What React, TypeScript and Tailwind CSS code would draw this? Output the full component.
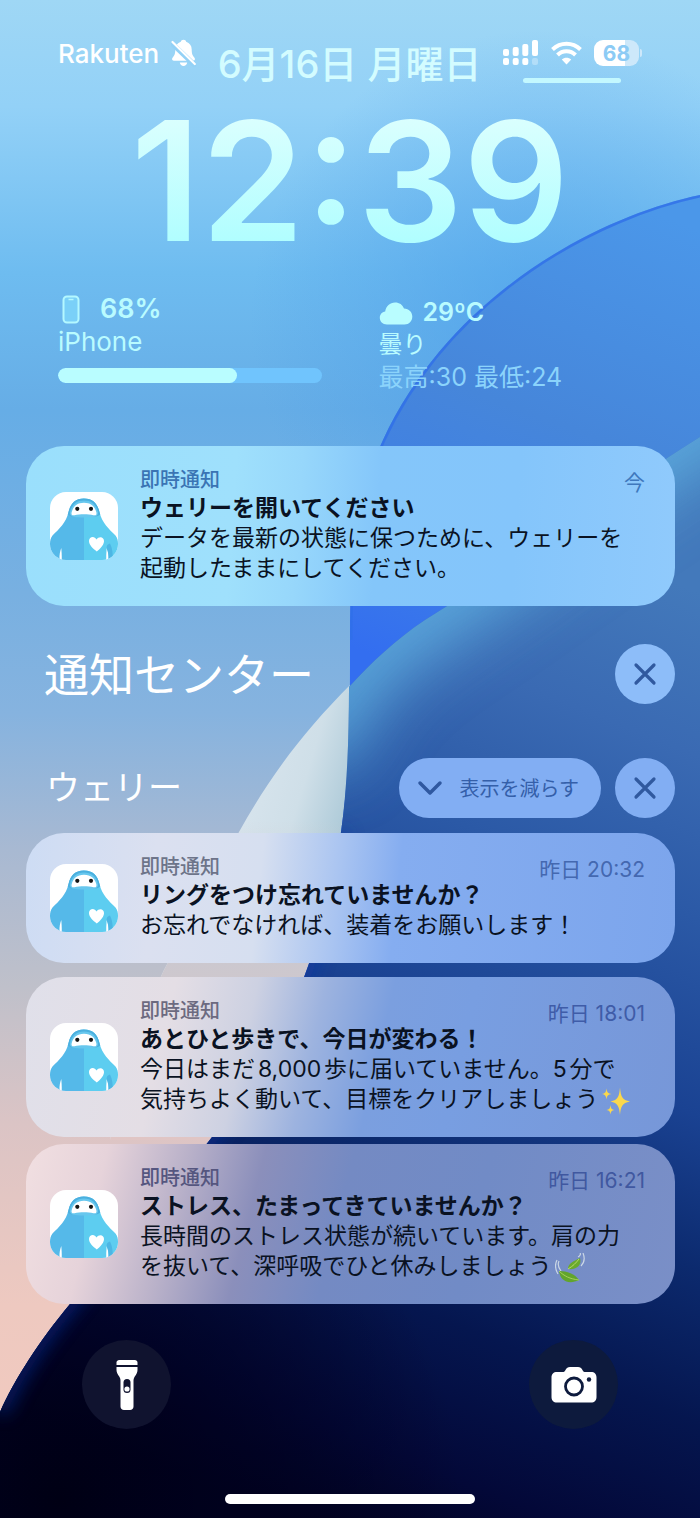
import React from 'react';

interface Notice {
    id: number;
    kind: string;
    title: string;
    lines: string[];
    time: string;
    emoji?: 'sparkles' | 'leaf';
    surface: string;
    kindColor: string;
    timeColor: string;
}

const pinned: Notice = {
    id: 1,
    kind: '即時通知',
    title: 'ウェリーを開いてください',
    lines: ['データを最新の状態に保つために、ウェリーを', '起動したままにしてください。'],
    time: '今',
    surface: 'bg-[linear-gradient(94deg,#9adffc_0%,#9fe0fc_32%,#97d7fb_42%,#84c6fa_54%,#84c5fb_75%,#90cafc_100%)]',
    kindColor: 'text-[#3a74b4]',
    timeColor: 'text-[#3f78bd]',
};

const history: Notice[] = [
    {
        id: 2,
        kind: '即時通知',
        title: 'リングをつけ忘れていませんか？',
        lines: ['お忘れでなければ、装着をお願いします！'],
        time: '昨日 20:32',
        surface: 'bg-[linear-gradient(96deg,#cddcf4_0%,#dbe0f0_20%,#d6dff0_36%,#a9c4f1_48%,#85adf0_57%,#7ca5ec_100%)]',
        kindColor: 'text-[#6d7489]',
        timeColor: 'text-[#4468b0]',
    },
    {
        id: 3,
        kind: '即時通知',
        title: 'あとひと歩きで、今日が変わる！',
        lines: ['今日はまだ8,000歩に届いていません。5分で', '気持ちよく動いて、目標をクリアしましょう'],
        time: '昨日 18:01',
        emoji: 'sparkles',
        surface: 'bg-[linear-gradient(103deg,#e0e0ea_0%,#e4dee5_22%,#cdd1e2_34%,#9db3df_44%,#7b9fdf_54%,#789ee1_66%,#7797d8_100%)]',
        kindColor: 'text-[#6c6a80]',
        timeColor: 'text-[#3f5ca8]',
    },
    {
        id: 4,
        kind: '即時通知',
        title: 'ストレス、たまってきていませんか？',
        lines: ['長時間のストレス状態が続いています。肩の力', 'を抜いて、深呼吸でひと休みしましょう'],
        time: '昨日 16:21',
        emoji: 'leaf',
        surface: 'bg-[linear-gradient(104deg,#f1dfe1_0%,#e6d3da_12%,#b9b1c9_24%,#8b8fbb_35%,#748ac3_48%,#718bc6_68%,#7a8fc7_100%)]',
        kindColor: 'text-[#55567f]',
        timeColor: 'text-[#4058a0]',
    },
];

const Wallpaper = () => (
    <svg className="absolute inset-0 -z-10 h-full w-full" viewBox="0 0 700 1518" preserveAspectRatio="none" aria-hidden="true">
        <defs>
            <linearGradient id="sky" x1="0" y1="0" x2="0" y2="1">
                <stop offset="0" stopColor="#9fd7f5" />
                <stop offset="0.07" stopColor="#93d1f7" />
                <stop offset="0.18" stopColor="#6ebcf0" />
                <stop offset="0.27" stopColor="#66ade6" />
                <stop offset="0.39" stopColor="#78b0e1" />
                <stop offset="0.47" stopColor="#86b3df" />
                <stop offset="0.56" stopColor="#a8b9d2" />
                <stop offset="0.65" stopColor="#bfc0ca" />
                <stop offset="0.74" stopColor="#dbc4c5" />
                <stop offset="0.86" stopColor="#eec9c0" />
                <stop offset="1" stopColor="#f3c9be" />
            </linearGradient>
            <radialGradient id="skyDepth" gradientUnits="userSpaceOnUse" cx="540" cy="320" r="290">
                <stop offset="0" stopColor="#4c9fea" stopOpacity="0.7" />
                <stop offset="0.5" stopColor="#4c9fea" stopOpacity="0.35" />
                <stop offset="1" stopColor="#4c9fea" stopOpacity="0" />
            </radialGradient>
            <linearGradient id="ball" gradientUnits="userSpaceOnUse" x1="620" y1="200" x2="440" y2="680">
                <stop offset="0" stopColor="#4b97e9" />
                <stop offset="0.45" stopColor="#4686da" />
                <stop offset="0.75" stopColor="#3e7ee6" />
                <stop offset="1" stopColor="#336ef0" />
            </linearGradient>
            <linearGradient id="leaf" gradientUnits="userSpaceOnUse" x1="240" y1="760" x2="370" y2="800">
                <stop offset="0" stopColor="#d9e5ee" />
                <stop offset="0.5" stopColor="#cfdfe8" />
                <stop offset="1" stopColor="#a2c3d3" />
            </linearGradient>
            <linearGradient id="leafFade" x1="0" y1="0" x2="0" y2="1">
                <stop offset="0.3" stopColor="#d0cdd2" stopOpacity="0" />
                <stop offset="0.6" stopColor="#cbc8cf" stopOpacity="1" />
                <stop offset="1" stopColor="#e0c5c4" />
            </linearGradient>
            <linearGradient id="deep" gradientUnits="userSpaceOnUse" x1="620" y1="560" x2="240" y2="1500">
                <stop offset="0" stopColor="#4379bb" />
                <stop offset="0.15" stopColor="#3a6ab3" />
                <stop offset="0.3" stopColor="#2b59a6" />
                <stop offset="0.48" stopColor="#1a4292" />
                <stop offset="0.62" stopColor="#0c2a6e" />
                <stop offset="0.76" stopColor="#05164f" />
                <stop offset="0.9" stopColor="#030838" />
                <stop offset="1" stopColor="#01021f" />
            </linearGradient>
            <radialGradient id="night" gradientUnits="userSpaceOnUse" cx="60" cy="1500" r="400">
                <stop offset="0" stopColor="#000014" />
                <stop offset="0.4" stopColor="#00001c" stopOpacity="0.7" />
                <stop offset="1" stopColor="#00001c" stopOpacity="0" />
            </radialGradient>
            <filter id="soft" filterUnits="userSpaceOnUse" x="100" y="200" width="800" height="900">
                <feGaussianBlur stdDeviation="34" />
            </filter>
            <filter id="glow" x="-30%" y="-30%" width="160%" height="160%">
                <feGaussianBlur stdDeviation="9" />
            </filter>
            <clipPath id="ballClip">
                <path d="M700 195C600 216 452 292 383 440C355 500 350 560 350 640C350 720 350 770 341 832C320 960 285 1044 212 1137C150 1218 110 1252 70 1304C40 1340 14 1380 0 1412V1518H700Z" />
            </clipPath>
            <clipPath id="deepClip">
                <path d="M700 437C600 500 520 560 425 620C395 640 372 662 349 687C349 740 347 790 341 832C320 960 285 1044 212 1137C150 1218 110 1252 70 1304C40 1340 14 1380 0 1412V1518H700Z" />
            </clipPath>
        </defs>
        <rect width="700" height="1518" fill="url(#sky)" />
        <rect width="700" height="700" fill="url(#skyDepth)" />
        {/* pale leaf between the two curves */}
        <path d="M352 683C300 735 268 780 239 832C210 885 185 930 164 970C140 1020 120 1080 110 1140H230L360 860Z" fill="url(#leaf)" />
        <path d="M352 683C300 735 268 780 239 832C210 885 185 930 164 970C140 1020 120 1080 110 1140H230L360 860Z" fill="url(#leafFade)" />
        <g clipPath="url(#ballClip)">
            <rect width="700" height="1518" fill="url(#ball)" />
            <path d="M700 195C600 216 452 292 383 440C355 500 350 560 350 640" fill="none" stroke="#2f6fe8" strokeWidth="5" opacity="0.8" />
        </g>
        <g clipPath="url(#deepClip)">
            <rect width="700" height="1518" fill="url(#deep)" />
            <path d="M780 370C600 480 520 550 425 610C380 640 345 670 325 710L310 760" fill="none" stroke="#62b4e4" strokeWidth="76" opacity="0.9" filter="url(#soft)" />
            <rect y="1000" width="700" height="518" fill="url(#night)" />
            <path d="M341 832C320 960 285 1044 212 1137C150 1218 110 1252 70 1304C40 1340 14 1380 0 1412" fill="none" stroke="#0d35a8" strokeWidth="14" opacity="0.6" filter="url(#glow)" />
        </g>
    </svg>
);

const BellOff = () => (
    <svg className="h-[28px] w-[25px]" viewBox="0 0 25 28" aria-hidden="true">
        <path d="M12.500 0.800c1.500 0 2.500 0.800 2.700 2 3.500 1.100 5.500 4 5.500 7.700 0 4.500 0.900 6 2.600 8 1 1.200 1 3.200-1 3.200H2.700c-2 0-2-2-1-3.200 1.700-2 2.600-3.500 2.600-8 0-3.700 2-6.600 5.500-7.700 0.200-1.200 1.200-2 2.700-2Z" fill="#fff" />
        <path d="M8.800 23.500h7.400c-0.300 2.100-1.800 3.400-3.700 3.400S9.100 25.600 8.800 23.500Z" fill="#fff" />
        <path d="M0 3.500 25 27.500" stroke="#93d1f6" strokeWidth="5" />
        <path d="M1.500 3 23.800 25" stroke="#fff" strokeWidth="2.200" strokeLinecap="round" />
    </svg>
);

const Signal = () => (
    <svg className="h-[26px] w-[36px]" viewBox="0 0 36 26" fill="#fff" aria-hidden="true">
        <rect x="0" y="9" width="6" height="7" rx="2" />
        <rect x="9.700" y="7" width="6" height="9" rx="2" />
        <rect x="19.300" y="4" width="6" height="12" rx="2" />
        <rect x="29" y="0" width="6" height="16" rx="2" />
        <rect x="0" y="18" width="6" height="7" rx="2" />
        <rect x="9.700" y="18" width="6" height="7" rx="2" />
        <rect x="19.300" y="18" width="6" height="7" rx="2" />
        <rect x="29" y="18" width="6" height="7" rx="2" opacity="0.3" />
    </svg>
);

const Wifi = () => (
    <svg className="h-[24px] w-[31px]" viewBox="0 0 31 24" fill="none" stroke="#fff" strokeWidth="4" aria-hidden="true">
        <path d="M1.500 8.500C9.500 0.800 21.500 0.800 29.500 8.500" />
        <path d="M6.500 14C11.500 9 19.500 9 24.500 14" />
        <path d="M15.500 23.500 10.800 18.500C13.500 16 17.500 16 20.200 18.500Z" fill="#fff" stroke="none" />
    </svg>
);

const Mascot = () => (
    <svg className="h-[68px] w-[68px] shrink-0 rounded-2xl bg-white" viewBox="0 0 68 68" aria-hidden="true">
        <path d="M34 6.500C25 6.500 20.500 11.500 18.500 20C16 31 9 37 2.500 43.500C0.500 46 0 49 0 52V68H34Z" fill="#55b9e9" />
        <path d="M34 6.500C43 6.500 47.500 11.500 49.500 20C52 31 59 37 65.500 43.500C67.500 46 68 49 68 52V68H34Z" fill="#5dcdf0" />
        <path d="M34 6.500C25 6.500 20.500 11.500 18.500 20L17.800 22.500C20 25.500 28 24.500 34 24.500C40 24.500 48 25.500 50.200 22.500L49.500 20C47.500 11.500 43 6.500 34 6.500Z" fill="#4bb0df" />
        <path d="M34 8.500C26.500 8.500 22 12.500 20 20C19 25 25 25.500 34 25.500C43 25.500 49 25 48 20C46 12.500 41.500 8.500 34 8.500Z" fill="#67c7ee" />
        <path d="M34 10.800C27 10.800 23.200 14.500 21.700 20C21 23 22.300 23.700 24.500 23.200C30 22 38 22 43.500 23.200C45.700 23.700 47 23 46.300 20C44.800 14.500 41 10.800 34 10.800Z" fill="#fff" />
        <circle cx="27.300" cy="16.800" r="2.100" fill="#151515" />
        <circle cx="41" cy="16.800" r="2.100" fill="#151515" />
        <path d="M9.500 68C9.300 63 9.800 60 11.300 56C11.700 60 11.800 64 11.800 68Z" fill="#fff" />
        <path d="M58.500 68C58.700 63 58.200 60 56.700 56C56.300 60 56.200 64 56.200 68Z" fill="#fff" />
        <path d="M56.700 56.500C56.200 54 57.500 52 60 51.500C62.500 56 63 62 62.500 68H58.500C58.700 63 58.200 60 56.700 56.500Z" fill="#4db6e4" />
        <path d="M46.800 59.500C43 56.500 39 53 39 49C39 44.500 44.500 43.300 46.500 47.500C49 43.500 54.500 45 54 49.500C53.500 53.500 50 57 46.800 59.500Z" fill="#fff" />
    </svg>
);

const Sparkles = () => (
    <svg className="ml-1 inline-block h-[28px] w-[28px] align-middle" viewBox="0 0 28 28" fill="#fbd84c" role="img" aria-label="きらきら">
        <path d="M18 0.500C18.800 9.500 20 13 28 14.500C20 16 18.800 19.500 18 28C17.200 19.500 16 16 8.500 14.500C16 13 17.200 9.500 18 0.500Z" />
        <path d="M4.500 1.500C5 5.500 6 6.500 9.500 7C6 7.500 5 8.500 4.500 12.500C4 8.500 3 7.500 0 7C3 6.500 4 5.500 4.500 1.500Z" />
        <path d="M8.500 18C9 21.500 9.500 22.500 12.500 23C9.500 23.500 9 24.500 8.500 27.500C8 24.500 7.500 23.500 4.500 23C7.500 22.500 8 21.500 8.500 18Z" />
    </svg>
);

const Leaf = () => (
    <svg className="ml-1 inline-block h-[30px] w-[30px] align-middle" viewBox="0 0 30 30" role="img" aria-label="葉">
        <path d="M3 21C0 16 0 11 2 7M6 18C3 14 3 10 4 8M26 13C29 10 30 5 28 0M23 4C25 3 26 1 25 0" fill="none" stroke="#dfe9ec" strokeWidth="1.200" opacity="0.8" />
        <path d="M25 5C27 12 22 17 13 16C13 10 19 8 25 5Z" fill="#6aaa2c" />
        <path d="M24 6C21 10 18 13 13 16" fill="none" stroke="#b8d96a" />
        <path d="M4 18C12 18 20 21 24 27C14 32 5 28 4 18Z" fill="#62a52c" />
        <path d="M4 18C9 23 15 26 24 27" fill="none" stroke="#a6cf5c" />
    </svg>
);

const CloseIcon = () => (
    <svg className="h-[24px] w-[24px]" viewBox="0 0 24 24" fill="none" stroke="#30599f" strokeWidth="3.200" strokeLinecap="round" aria-hidden="true">
        <path d="M3 3 21 21M21 3 3 21" />
    </svg>
);

const NoticeCard = ({ notice }: { notice: Notice }) => (
    <article className={`flex items-center gap-[22px] rounded-[38px] pt-[21px] pr-[30px] pb-[23px] pl-6 ${notice.surface}`}>
        <div className="pt-0.5">
            <Mascot />
        </div>
        <div className="min-w-0 flex-1 text-[23px] leading-[30px] text-[#0a1222] [text-autospace:normal]">
            <div className="flex h-[26px] items-start justify-between">
                <span className={`text-[20px] leading-[26px] font-medium ${notice.kindColor}`}>{notice.kind}</span>
                <time className={`text-[21px] leading-8 [text-autospace:no-autospace] ${notice.timeColor}`}>{notice.time}</time>
            </div>
            <h3 className="font-bold whitespace-nowrap">{notice.title}</h3>
            {notice.lines.map((line, i) => (
                <p key={line} className="h-[30px] whitespace-nowrap">
                    {line}
                    {i === notice.lines.length - 1 && notice.emoji === 'sparkles' && <Sparkles />}
                    {i === notice.lines.length - 1 && notice.emoji === 'leaf' && <Leaf />}
                </p>
            ))}
        </div>
    </article>
);

export default function App() {
    return (
        <main className="relative isolate min-h-screen overflow-hidden font-['Inter','Noto_Sans_CJK_JP',sans-serif]">
            <Wallpaper />

            {/* Status bar */}
            <header className="flex items-start justify-between px-[58px] pt-9">
                <div className="flex h-[34px] items-center gap-3 text-[26px] font-medium text-white">
                    Rakuten
                    <BellOff />
                </div>
                <h2 className="text-[38px] leading-[56px] font-medium whitespace-nowrap text-[#d3fcff]">6月16日 月曜日</h2>
                <div className="flex flex-col items-center">
                    <div className="flex h-[34px] items-center gap-3">
                        <Signal />
                        <Wifi />
                        <div className="flex items-center gap-px">
                            <span className="flex h-[26px] w-[45px] items-center justify-center rounded-[9px] bg-[linear-gradient(90deg,#fff_68%,#cde8fa_68%)] text-[21px] leading-none font-bold text-[#8ccbf5]">
                                68
                            </span>
                            <span className="h-2 w-0.5 rounded-r bg-[#cde8fa]" />
                        </div>
                    </div>
                    <div className="mt-2 h-[5px] w-[98px] rounded-full bg-[#c3f8ff]" />
                </div>
            </header>

            {/* Clock */}
            <h1 className="bg-[linear-gradient(180deg,#ddfffe_10%,#adfeff_90%)] bg-clip-text text-center text-[166px] leading-[178px] font-semibold text-transparent">
                12:39
            </h1>

            {/* Widgets */}
            <section className="mt-[23px] grid grid-cols-2 gap-x-[57px] px-[58px] text-[#b9fbff]">
                <div>
                    <div className="flex h-8 items-center gap-5 pl-1 text-[27px] font-semibold">
                        <svg className="h-[29px] w-[18px]" viewBox="0 0 18 29" aria-hidden="true">
                            <rect x="1.500" y="1.500" width="15" height="26" rx="3.500" fill="#7ad0f8" stroke="#b4f8ff" strokeWidth="2" />
                            <path d="M6.500 4.500h5" stroke="#b4f8ff" strokeWidth="1.500" />
                        </svg>
                        68%
                    </div>
                    <div className="text-[26px] leading-[34px]">iPhone</div>
                    <div className="mt-[9px] h-[15px] overflow-hidden rounded-full bg-[#70c4fd]">
                        <div className="h-full rounded-full bg-[#b9fdff]" style={{ width: '68%' }} />
                    </div>
                </div>
                <div className="pt-0.5">
                    <div className="flex h-9 items-center gap-2.5 text-[25px] font-semibold">
                        <svg className="h-[23px] w-[34px]" viewBox="0 0 34 23" fill="#b9fdff" aria-hidden="true">
                            <path d="M8 22.500C3.500 22.500 0.800 19.500 0.800 15.800C0.800 12.500 3 10 6.200 9.500C7 4 11 0.500 16 0.500C20.500 0.500 23.500 2.800 25 6.500C30 6.800 33.300 10 33.300 14.500C33.300 19 30 22.500 25.500 22.500Z" />
                        </svg>
                        29ºC
                    </div>
                    <div className="text-[24px] leading-[28px]">曇り</div>
                    <div className="mt-0.5 text-[25px] leading-8 text-[#8bd3fb]">最高:30 最低:24</div>
                </div>
            </section>

            <div className="mt-[53px] pr-[25px] pl-[26px]">
                <NoticeCard notice={pinned} />

                {/* Notification center */}
                <div className="mt-[38px] flex items-center justify-between pl-[18px]">
                    <h2 className="pt-1 text-[45px] leading-[56px] text-white">通知センター</h2>
                    <button type="button" aria-label="すべて消去" className="flex size-[60px] items-center justify-center rounded-full bg-[#8dbdf9]">
                        <CloseIcon />
                    </button>
                </div>
                <div className="mt-[54px] flex items-center pl-5">
                    <h2 className="flex-1 text-[34px] leading-[60px] text-white">ウェリー</h2>
                    <button type="button" className="flex h-[60px] items-center gap-4 rounded-full bg-[#82aef3] px-[18px] text-[20px] text-[#345fa9]">
                        <svg className="h-[16px] w-[26px]" viewBox="0 0 26 16" fill="none" stroke="#2f58a0" strokeWidth="3.500" strokeLinecap="round" strokeLinejoin="round" aria-hidden="true">
                            <path d="M3 3 13 13 23 3" />
                        </svg>
                        <span className="pt-0.5 pr-1">表示を減らす</span>
                    </button>
                    <button type="button" aria-label="消去" className="ml-3.5 flex size-[60px] items-center justify-center rounded-full bg-[#82aef3]">
                        <CloseIcon />
                    </button>
                </div>

                <div className="mt-[15px] space-y-[7px]">
                    {history.map(notice => (
                        <div key={notice.id} className="first:mb-3.5">
                            <NoticeCard notice={notice} />
                        </div>
                    ))}
                </div>
            </div>

            {/* Shortcuts */}
            <footer className="mt-9 pb-3.5">
                <div className="flex justify-between px-[82px]">
                    <button type="button" aria-label="フラッシュライト" className="flex size-[89px] items-center justify-center rounded-full bg-[#10132f]">
                        <svg className="h-[52px] w-[22px]" viewBox="0 0 22 52" fill="#fff" aria-hidden="true">
                            <path d="M0.500 6V3.500C0.500 2 1.700 1 3.200 1H18.800C20.300 1 21.500 2 21.500 3.500V6Z" />
                            <path d="M0.500 8H21.500V11C21.500 15.500 17.500 17.500 17.500 21.500V47.500C17.500 49.700 16 51 14 51H8C6 51 4.500 49.700 4.500 47.500V21.500C4.500 17.500 0.500 15.500 0.500 11Z" />
                            <rect x="7.500" y="20" width="7" height="14" rx="3.500" fill="#10132f" />
                            <circle cx="11" cy="30" r="2.600" />
                        </svg>
                    </button>
                    <button type="button" aria-label="カメラ" className="flex size-[89px] items-center justify-center rounded-full bg-[#0d1a3d]">
                        <svg className="h-[38px] w-[46px]" viewBox="0 0 46 38" fill="#fff" aria-hidden="true">
                            <path d="M6 6H12.500C14.500 6 14.500 1 19 1H27C31.500 1 31.500 6 33.500 6H40C43.500 6 45.500 8 45.500 11.500V31C45.500 34.500 43.500 36.500 40 36.500H6C2.500 36.500 0.500 34.500 0.500 31V11.500C0.500 8 2.500 6 6 6Z" />
                            <circle cx="23" cy="20.500" r="8.500" fill="none" stroke="#0d1a3d" strokeWidth="2.800" />
                            <circle cx="38" cy="13.500" r="2.200" fill="#0d1a3d" />
                        </svg>
                    </button>
                </div>
                <div className="mx-auto mt-[65px] h-[10px] w-[250px] rounded-full bg-white" />
            </footer>
        </main>
    );
}
